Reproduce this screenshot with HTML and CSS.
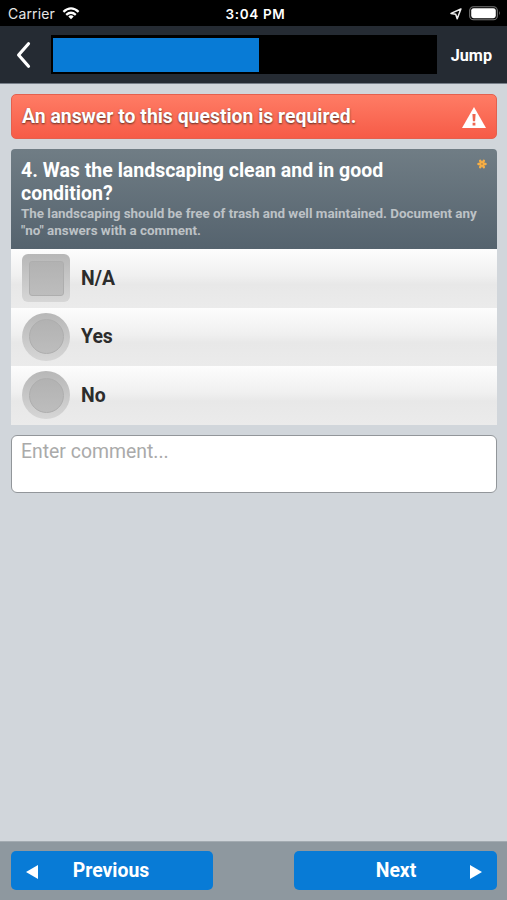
FILE: index.html
```
<!DOCTYPE html>
<html lang="en">
<head>
<meta charset="utf-8">
<title>Survey question</title>
<link rel="stylesheet" href="styles.css">
</head>
<body>
<div class="app">
  <div class="status">
    <div class="carrier"><span class="carrier-name">Carrier</span>
      <svg width="18" height="13" viewBox="0 0 18 13" fill="none" stroke="#fff" stroke-width="2.3"><path d="M1.4 4.8Q9 -2 16.6 4.8M4.2 7.8Q9 3.6 13.8 7.8"/><path d="M6.3 9.4Q9 7.2 11.7 9.4L9 12.3Z" fill="#fff" stroke="none"/></svg>
    </div>
    <div class="time">3:04 PM</div>
    <div class="indicators">
      <svg width="12" height="12" viewBox="0 0 12 12" fill="none" stroke="#eee" stroke-width="1.5" stroke-linejoin="round"><path d="M10.9 1L1 5.4L5.7 6.2L7.2 10.8Z"/></svg>
      <svg width="32" height="15" viewBox="0 0 32 15"><rect x=".7" y=".7" width="27.6" height="13" rx="3.8" fill="none" stroke="#777" stroke-width="1.1"/><rect x="2.2" y="2.2" width="24.6" height="10" rx="2.4" fill="#fff"/><path d="M30 5Q31.8 7.2 30 9.4Z" fill="#777"/></svg>
    </div>
  </div>
  <header class="toolbar">
    <svg class="back" width="16" height="28" viewBox="0 0 16 28" fill="none" stroke="#fff" stroke-width="3.2" stroke-linecap="round" stroke-linejoin="round"><path d="M12.5 2.8L2.6 14L12.5 25.2"/></svg>
    <div class="progress"><div class="progress-fill"></div></div>
    <span class="jump">Jump</span>
  </header>
  <main class="content">
    <div class="alert"><span>An answer to this question is required.</span>
      <svg width="24" height="21" viewBox="0 0 24 21"><path d="M12 0L24 21H0Z" fill="#fff"/><path d="M10.4 7H13.6L13.1 14.2H10.9ZM10.6 15.7H13.4V18.4H10.6Z" fill="#ee6650"/></svg>
    </div>
    <section class="question">
      <div class="question-head">
        <h1>4. Was the landscaping clean and in good condition?</h1>
        <p>The landscaping should be free of trash and well maintained. Document any "no" answers with a comment.</p>
        <svg class="required" width="10" height="10" viewBox="0 0 10 10" stroke="#f6ae45" stroke-width="2.5" stroke-linecap="round"><path d="M1.5 5H8.5M3.2 1.9L6.8 8.1M6.8 1.9L3.2 8.1"/><circle cx="5" cy="5" r=".9" fill="#b98948" stroke="none"/></svg>
      </div>
      <div class="option"><span class="control square"><i></i></span>N/A</div>
      <div class="option"><span class="control"><i></i></span>Yes</div>
      <div class="option"><span class="control"><i></i></span>No</div>
    </section>
    <textarea class="comment" placeholder="Enter comment..."></textarea>
  </main>
  <footer class="footer">
    <div class="button previous"><svg width="12" height="14" viewBox="0 0 12 14"><path d="M0 7L12 0V14Z" fill="#fff"/></svg><span>Previous</span></div>
    <div class="button next"><span>Next</span><svg width="12" height="14" viewBox="0 0 12 14"><path d="M12 7L0 0V14Z" fill="#fff"/></svg></div>
  </footer>
</div>
</body>
</html>
```
FILE: styles.css
```
* { box-sizing: border-box; }
body { margin: 0; font-family: Roboto, sans-serif; }
.app { width: 507px; height: 900px; display: flex; flex-direction: column; overflow: hidden; background: #d1d6db; }
.status { height: 26px; flex: none; background: #000; color: #fff; display: grid; grid-template-columns: 1fr auto 1fr; align-items: center; padding: 1px 6px 0 8px; font-family: Inter, sans-serif; font-size: 14px; }
.carrier { display: flex; align-items: center; gap: 7px; color: #e6e6e6; }
.carrier-name { letter-spacing: 0.15px; }
.time { font-weight: 600; font-size: 13.5px; letter-spacing: .65px; padding-left: 2px; }
.indicators { display: flex; align-items: center; justify-content: flex-end; gap: 7px; }
.toolbar { height: 58px; flex: none; display: flex; align-items: center; background: #252b33; border-bottom: 1px solid #777f89; padding: 0 15px 0 16px; }
.back { flex: none; margin-right: 19px; }
.progress { width: 386px; height: 39px; background: #000; padding: 3px 2px 2px; }
.progress-fill { width: 206px; height: 34px; background: #087bd6; }
.jump { margin-left: auto; color: #fff; font-size: 16.2px; font-weight: 700; position: relative; top: 1px; }
.content { flex: 1; padding: 10px 10px 0 11px; }
.alert { height: 45px; display: flex; align-items: center; justify-content: space-between; padding: 0 10px 0 10px; border: 1px solid #e4604e; border-radius: 5px; background: linear-gradient(#ff7c65, #f65b47); color: #fff; font-size: 19.4px; font-weight: 700; text-shadow: 0 1px 2px #5b3123; }
.alert svg { position: relative; top: 1px; }
.question { margin-top: 10px; }
.question-head { position: relative; height: 100px; padding: 10px 10px 0; border-radius: 4px 4px 0 0; background: linear-gradient(#707d85, #55636e); }
h1 { width: 400px; margin: 0; font-size: 19.5px; line-height: 23px; font-weight: 700; color: #fff; }
p { margin: 0; font-size: 13.4px; line-height: 17px; font-weight: 700; color: #bdc2c6; }
.required { position: absolute; right: 10px; top: 10px; }
.option { height: 58.6px; display: flex; align-items: center; gap: 11px; padding-left: 11px; color: #2c2c2c; font-size: 19.4px; font-weight: 700; background: linear-gradient(#fdfdfd, #f0f0f0 45%, #e8e8e8 60%, #ebebeb); }
.control { width: 48px; height: 48px; flex: none; border-radius: 50%; background: linear-gradient(#b7b7b7, #d6d6d6); display: grid; place-items: center; }
.control i { width: 35px; height: 35px; border-radius: 50%; border: 1px solid #aeaeae; background: linear-gradient(#b2b2b2, #bdbdbd); }
.square { border-radius: 6px; }
.square i { border-radius: 3px; }
.comment { display: block; width: 100%; height: 58px; margin-top: 10px; padding: 4px 9px; resize: none; border: 1px solid #92969a; border-radius: 6px; background: #fff; font: 19.4px/24px Roboto, sans-serif; outline: 0; }
.comment::placeholder { color: #aaa; }
.footer { height: 59px; flex: none; display: flex; align-items: flex-start; justify-content: space-between; padding: 9px 10px 0 11px; background: #8e989f; border-top: 1px solid #a3abb1; }
.button { width: 202px; height: 39px; display: flex; align-items: center; border-radius: 5px; background: #087bd6; color: #fff; font-size: 19.4px; font-weight: 700; }
.button span { flex: 1; text-align: center; }
.button svg { flex: none; position: relative; top: 1px; }
.previous { padding: 0 29px 0 15px; }
.next { width: 203px; padding: 0 15px 0 28px; }
```
